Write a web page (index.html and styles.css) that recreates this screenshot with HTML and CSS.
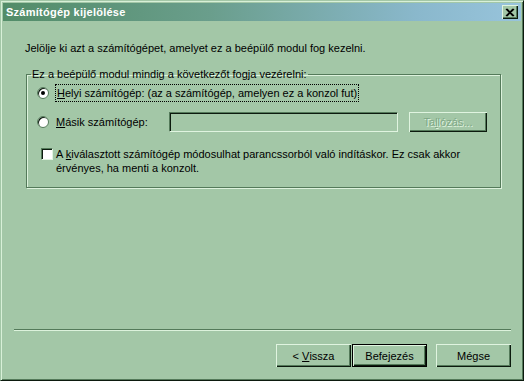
FILE: index.html
```html
<!DOCTYPE html>
<html>
<head>
<meta charset="utf-8">
<link rel="stylesheet" href="styles.css">
</head>
<body>
<div class="window">
  <div class="titlebar">
    <span class="title">Számítógép kijelölése</span>
    <span class="close"><svg width="10" height="9" viewBox="0 0 10 9"><path d="M1 1L8 8M2 1L9 8M8 1L1 8M9 1L2 8" stroke="#000" stroke-width="1.2"/></svg></span>
  </div>
  <div class="content">
    <p class="intro">Jelölje ki azt a számítógépet, amelyet ez a beépülő modul fog kezelni.</p>
    <fieldset class="group">
      <legend>Ez a beépülő modul mindig a következőt fogja vezérelni:</legend>
      <div class="row row1">
        <span class="radio checked"></span>
        <span class="label focus"><u>H</u>elyi számítógép: (az a számítógép, amelyen ez a konzol fut)</span>
      </div>
      <div class="row row2">
        <span class="radio"></span>
        <span class="label lbl2"><u>M</u>ásik számítógép:</span>
        <span class="field"></span>
        <span class="btn disabled">Ta<u>l</u>lózás...</span>
      </div>
      <div class="row row3">
        <span class="check"></span>
        <span class="label">A <u>k</u>iválasztott számítógép módosulhat parancssorból való indításkor. Ez csak akkor érvényes, ha menti a konzolt.</span>
      </div>
    </fieldset>
  </div>
  <div class="footer">
    <div class="sep"></div>
    <div class="buttons">
      <span class="btn">&lt;&nbsp;<u>V</u>issza</span>
      <span class="btn default">Befejezés</span>
      <span class="btn cancel">Mégse</span>
    </div>
  </div>
</div>
</body>
</html>
```
FILE: styles.css
```css
* { box-sizing: border-box; }
html, body { margin: 0; padding: 0; }
body {
  width: 524px; height: 381px; overflow: hidden;
  font-family: "Liberation Sans", Arial, sans-serif;
  font-size: 11px; color: #000;
}
.window {
  width: 524px; height: 381px;
  background: #a3c7a7;
  border-top: 1px solid #a3c7a7;
  border-left: 1px solid #a3c7a7;
  border-right: 1px solid #0c1a0e;
  border-bottom: 1px solid #0c1a0e;
  box-shadow: inset 1px 1px 0 #d8f0d8, inset -1px -1px 0 #547a5a;
  padding: 2px;
  display: flex; flex-direction: column;
}
.titlebar {
  height: 18px;
  background: linear-gradient(to right, #528c68 0%, #6a9e8c 40%, #8ab8cc 80%, #98c4dc 100%);
  display: flex; align-items: center; justify-content: space-between;
  padding: 0 3px 0 3px;
}
.title {
  color: #fff; font-weight: bold; font-size: 11px;
  font-family: "Liberation Sans", Arial, sans-serif;
  letter-spacing: 0.25px;
}
.close {
  width: 16px; height: 14px;
  background: #a3c7a7;
  box-shadow: inset 1px 1px 0 #e0f4e0, inset -1px -1px 0 #0c1a0e, inset -2px -2px 0 #547a5a;
  display: flex; align-items: center; justify-content: center;
}
.content { padding: 0 20px 0 22px; flex: 1; }
.intro { margin: 21px 0 0 0; }
.group {
  margin: 14px 0 0 1px; padding: 0 0 0 0;
  height: 120px;
  border: 1px solid #547a5a;
  box-shadow: 1px 1px 0 #dcf2dc, inset 1px 1px 0 #dcf2dc;
}
.group legend { padding: 0 1px; margin-left: 4px; }
.row { display: flex; align-items: center; }
.row1 { margin: 5px 0 0 10px; }
.row2 { margin: 11px 0 0 10px; }
.row3 { margin: 16px 0 0 14px; align-items: flex-start; }
.radio {
  width: 12px; height: 12px; border-radius: 50%;
  background: #fff;
  border: 1px solid #547a5a;
  box-shadow: inset 1px 1px 0 #0c1a0e;
  margin-right: 7px; position: relative; flex: none;
}
.radio.checked::after {
  content: ""; position: absolute; left: 3px; top: 3px;
  width: 4px; height: 4px; border-radius: 50%; background: #000;
}
.focus { outline: 1px dotted #000; outline-offset: 0; padding: 2px 1px; }
.lbl2 { width: 113px; }
.field {
  width: 229px; height: 20px;
  background: #a3c7a7;
  border-top: 1px solid #547a5a; border-left: 1px solid #547a5a;
  border-right: 1px solid #e0f4e0; border-bottom: 1px solid #e0f4e0;
  box-shadow: inset 1px 1px 0 #0c1a0e;
}
.btn {
  display: inline-flex; align-items: center; justify-content: center;
  width: 75px; height: 23px;
  background: #a3c7a7;
  box-shadow: inset 1px 1px 0 #e0f4e0, inset -1px -1px 0 #0c1a0e, inset -2px -2px 0 #547a5a;
}
.row2 .btn { margin-left: 11px; width: 78px; height: 20px; }
.btn.disabled { color: #7fa786; text-shadow: 1px 1px 0 #e0f4e0; }
.check {
  width: 12px; height: 12px; background: #fff; flex: none;
  border-top: 1px solid #547a5a; border-left: 1px solid #547a5a;
  border-right: 1px solid #e0f4e0; border-bottom: 1px solid #e0f4e0;
  box-shadow: inset 1px 1px 0 #0c1a0e;
  margin-right: 3px;
}
.row3 .label { width: 420px; line-height: 14px; margin-top: -1px; }
.footer { padding: 0 10px 11px 11px; }
.sep { height: 2px; border-top: 1px solid #547a5a; border-bottom: 1px solid #dcf2dc; }
.buttons { display: flex; justify-content: flex-end; margin-top: 13px; gap: 0; }
.btn.default { margin-left: 1px; box-shadow: inset 0 0 0 1px #000, inset 2px 2px 0 #e0f4e0, inset -2px -2px 0 #0c1a0e, inset -3px -3px 0 #547a5a; }
.btn.cancel { margin-left: 9px; }
u { text-decoration: underline; }
```
